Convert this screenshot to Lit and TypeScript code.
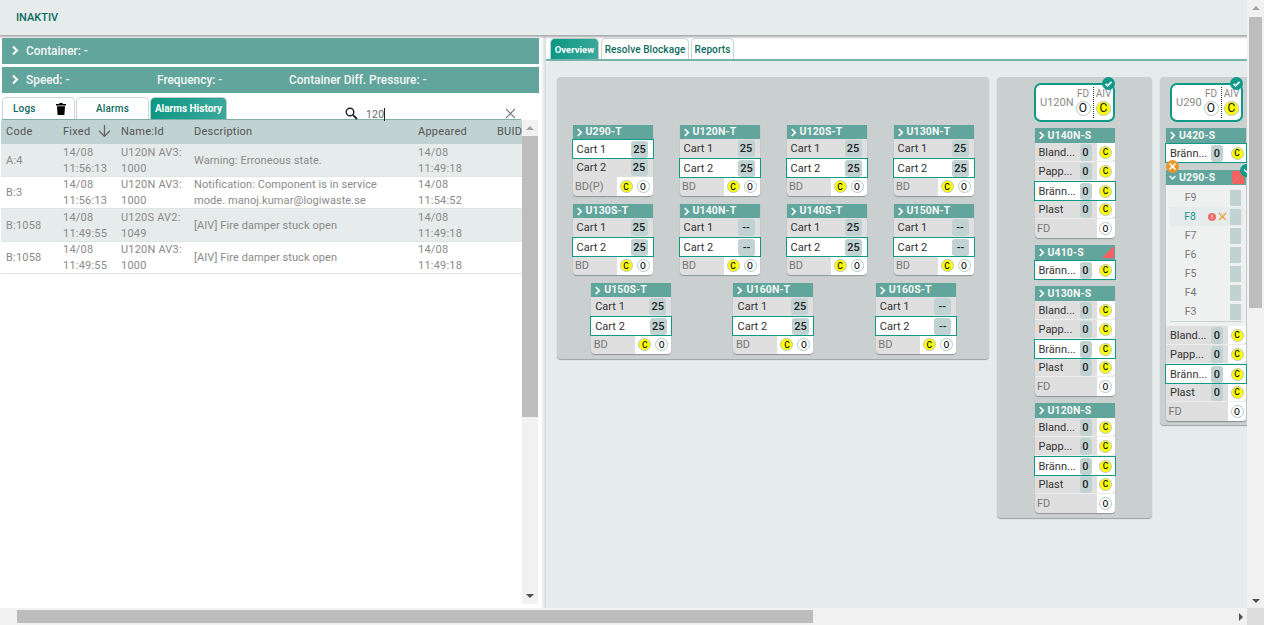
import { LitElement, css, html, nothing } from 'lit';
import { customElement } from 'lit/decorators.js';

const chevron = html`<svg class="chev" viewBox="0 0 8 10"><path d="M2 1l4 4-4 4" fill="none" stroke="#fff" stroke-width="2"/></svg>`;
const check = html`<svg viewBox="0 0 13 13" width="13" height="13"><circle cx="6.5" cy="6.5" r="6.5" fill="#0f9a88"/><path d="M3.5 6.8l2.1 2 3.9-4" fill="none" stroke="#fff" stroke-width="1.7"/></svg>`;

type Row = { label: string; value?: string; sel?: boolean };

const tRows: { name: string; sel: number; value: string; bd?: string }[][] = [
  [
    { name: 'U290-T', sel: 1, value: '25', bd: 'BD(P)' },
    { name: 'U120N-T', sel: 2, value: '25' },
    { name: 'U120S-T', sel: 2, value: '25' },
    { name: 'U130N-T', sel: 2, value: '25' },
  ],
  [
    { name: 'U130S-T', sel: 2, value: '25' },
    { name: 'U140N-T', sel: 2, value: '--' },
    { name: 'U140S-T', sel: 2, value: '25' },
    { name: 'U150N-T', sel: 2, value: '--' },
  ],
  [
    { name: 'U150S-T', sel: 2, value: '25' },
    { name: 'U160N-T', sel: 2, value: '25' },
    { name: 'U160S-T', sel: 2, value: '--' },
  ],
];

const alarms = [
  ['A:4', '14/08 11:56:13', 'U120N AV3: 1000', 'Warning: Erroneous state.', '14/08 11:49:18'],
  ['B:3', '14/08 11:56:13', 'U120N AV3: 1000', 'Notification: Component is in service mode. manoj.kumar@logiwaste.se', '14/08 11:54:52'],
  ['B:1058', '14/08 11:49:55', 'U120S AV2: 1049', '[AIV] Fire damper stuck open', '14/08 11:49:18'],
  ['B:1058', '14/08 11:49:55', 'U120N AV3: 1000', '[AIV] Fire damper stuck open', '14/08 11:49:18'],
];

const fractions: Row[] = [
  { label: 'Bland...', value: '0' },
  { label: 'Papp...', value: '0' },
  { label: 'Bränn...', value: '0', sel: true },
  { label: 'Plast', value: '0' },
  { label: 'FD' },
];

@customElement('app-root')
export class AppRoot extends LitElement {
  static styles = css`
    :host {
      display: grid;
      grid-template-columns: 1247px 17px;
      grid-template-rows: 608px 17px;
      width: 1264px;
      height: 625px;
      overflow: hidden;
      font-family: Roboto, "Liberation Sans", sans-serif;
      background: #fff;
      color: #333;
    }
    .page { display: flex; flex-direction: column; overflow: hidden; min-width: 0; }
    .top {
      flex: none;
      height: 35px;
      box-sizing: border-box;
      padding: 11px 0 0 16px;
      background: #e6eceb;
      box-shadow: 0 1px 2px 1px #a9a9a9;
      color: #0c6b5f;
      font-size: 11px;
      line-height: 14px;
      font-weight: 500;
      position: relative;
    }
    .main { flex: 1; display: flex; min-height: 0; }

    /* left */
    .left { flex: none; width: 541px; box-sizing: border-box; padding: 3px 2px 0 2px; display: flex; flex-direction: column; }
    .bar {
      height: 26px;
      box-sizing: border-box;
      padding-bottom: 1px;
      margin-bottom: 3px;
      background: #62a59c;
      color: #f2f7f6;
      font-size: 11.9px;
      font-weight: 500;
      display: grid;
      grid-template-columns: 24px 131px 132px 1fr;
      align-items: center;
    }
    .bar .chev { width: 8px; height: 11px; margin-left: 9px; }
    .tabs { display: flex; align-items: flex-end; margin: 1px 0 0 0; width: 519px; height: 23px; border-bottom: 1px solid #7fb0a8; box-sizing: border-box; position: relative; }
    .tab {
      box-sizing: border-box;
      height: 22px;
      border: 1px solid #c9d6d4;
      border-bottom: 0;
      border-radius: 5px 5px 0 0;
      background: #fff;
      color: #0c6b5f;
      font-size: 10px;
      font-weight: 500;
      letter-spacing: .2px;
      display: flex;
      align-items: center;
      justify-content: center;
      flex: none;
    }
    .tab.on { background: linear-gradient(100deg, #0b9784, #3da89b); color: #fff; border-color: #b7cfcb; font-weight: 700; letter-spacing: 0; font-size: 9.5px; }
    .logs { width: 73px; justify-content: flex-start; padding-left: 10px; gap: 20px; }
    .alarms { width: 73px; margin-right: 1px; margin-left: 1px; }
    .tab.on.history { width: 77px; font-size: 10px; }
    .search { display: flex; align-items: center; margin: 0 0 0 118px; height: 11px; flex: 1; font-size: 10.5px; color: #666; }
    .search .txt { margin: 1px 0 0 8px; border-right: 1px solid #222; line-height: 13px; letter-spacing: .2px; }
    .search .x { margin-left: auto; margin-right: 5px; }
    .tablewrap { flex: 1; display: grid; grid-template-columns: 521px 16px; margin-left: -1px; min-height: 0; }
    .thead, .tr { display: grid; grid-template-columns: 57px 58px 73px 224px 79px 24px; padding-left: 5px; align-items: center; }
    .thead { height: 24px; box-sizing: border-box; padding-bottom: 2px; background: #c1d2d2; color: #555; font-size: 11px; letter-spacing: .25px; overflow: hidden; white-space: nowrap; }
    .thead .sort { display: flex; align-items: center; gap: 8px; }
    .tr { box-sizing: border-box; border-bottom: 1px solid #dfe5e4; height: 32.5px; padding-top: .5px; color: #8a8a8a; font-size: 11px; line-height: 16px; letter-spacing: .2px; }
    .tr:nth-child(even) { background: #e6eceb; }
    .tr span:nth-child(2), .tr span:nth-child(5) { width: 46px; }
    .tr span:nth-child(3) { width: 64px; }
    .tr span:nth-child(4) { width: 200px; letter-spacing: .08px; }
    .vs { background: #f1f1f1; display: flex; flex-direction: column; align-items: center; }
    .vs .thumb { background: #bdbdbd; width: 100%; }
    .left .vs { margin-bottom: 4px; }
    .left .vs .thumb { height: 281px; }
    .up, .down, .rgt { width: 0; height: 0; border: 4px solid transparent; flex: none; }
    .up { border-bottom-color: #a3a3a3; border-top-width: 0; margin: 6px 0 6px; }
    .down { border-top-color: #505050; border-bottom-width: 0; margin: auto 0 6px; }

    /* right */
    .splitter { flex: none; width: 5px; background: linear-gradient(90deg, #fff, #d4d9d9); }
    .right { flex: 1; min-width: 0; display: flex; flex-direction: column; }
    .rtabs { flex: none; display: flex; gap: 2px; padding: 3px 0 0 4px; height: 26px; box-sizing: border-box; border-bottom: 2px solid #77b3aa; background: linear-gradient(#f1f3f3, #fff 6px); }
    .rtabs .tab { height: 21px; letter-spacing: .1px; }
    .rtabs .tab.on { letter-spacing: 0; }
    .ov { width: 49px; }
    .rb { width: 88px; }
    .rp { width: 43px; }
    .content { flex: 1; min-height: 0; display: flex; align-items: flex-start; gap: 8px; padding: 16px 0 0 11px; background: #e6eceb; border-radius: 5px 0 0 0; overflow: hidden; }
    .panel { flex: none; box-sizing: border-box; background: #c9d0cf; border-radius: 4px; box-shadow: 0 1px 1px #9aa3a2; }
    .p1 { width: 432px; height: 282px; padding: 48px 2px 0; }
    .cardrow { display: flex; justify-content: space-around; margin-bottom: 8px; }
    .cardrow:last-child { padding-left: 1px; }
    .p2 { width: 155px; height: 441px; padding-top: 6px; display: flex; flex-direction: column; align-items: center; gap: 7px; }
    .p2 .status { margin-bottom: -1px; }
    .p3 { width: 100px; height: 348px; padding: 6px 0 0 6px; display: flex; flex-direction: column; align-items: flex-start; }

    /* cards */
    .card { width: 80px; flex: none; background: #dfdfdf; border-radius: 0 0 4px 4px; box-shadow: 0 1px 1px #8d9695; position: relative; }
    .head { height: 14px; background: #62a59c; color: #f4f8f7; font-size: 10.5px; font-weight: 700; line-height: 14px; display: flex; align-items: center; gap: 3px; padding-left: 3px; letter-spacing: .1px; position: relative; }
    .s .head { height: 15px; }
    .head .chev { width: 7px; height: 9px; }
    .row { height: 19px; display: flex; align-items: center; font-size: 11px; box-sizing: border-box; padding-left: 4px; position: relative; }
    .row.sel { height: 20px; margin: 0 -1px -1px; padding-left: 4px; background: #fff; border: 1.5px solid #0f9a88; z-index: 1; }
    .row .lab { flex: 1; white-space: nowrap; }
    .val { flex: none; box-sizing: border-box; width: 17px; height: 17px; margin-right: 5px; background: #c1d2d2; border-radius: 3px; font-size: 11px; font-weight: 500; color: #222; display: flex; align-items: center; justify-content: center; }
    .t .sel .val { margin-right: 4.5px; }
    .row.bd { padding-left: 2.5px; padding-right: 0; }
    .row.bd .lab { color: #777; font-size: 11px; }
    .white { flex: none; align-self: stretch; background: #fff; display: flex; align-items: center; justify-content: center; gap: 4px; border-radius: 0 0 4px 0; }
    .t .white { width: 36px; }
    .s .val { width: 12px; margin-right: 5px; }
    .s .white { width: 18px; }
    .s .row:not(.sel) { border-bottom: 1px solid #ececec; }
    .s .row.bd { border-bottom: 0; }
    .ico { box-sizing: border-box; width: 13px; height: 13px; border-radius: 50%; border: 1.5px solid #b5c8c6; display: flex; align-items: center; justify-content: center; font-size: 8.5px; font-weight: 500; color: #111; background: #fff; flex: none; }
    .ico.c { background: #ffff00; }
    .ico.big { width: 15px; height: 15px; font-size: 12px; font-weight: 400; }

    .corner { position: absolute; right: 1px; top: 1px; width: 0; height: 0; border-left: 12px solid transparent; border-bottom: 12px solid #f66060; border-top: 0; }
    .redsq { position: absolute; right: 2px; top: 1px; width: 12px; height: 13px; }
    .badge { position: absolute; line-height: 0; z-index: 2; }
    .status { box-sizing: border-box; flex: none; width: 81px; height: 39px; background: #fff; border: 2px solid #0f9a88; border-radius: 7px; display: flex; align-items: center; position: relative; color: #8a8a8a; font-size: 11px; padding-left: 4px; }
    .status .nm { flex: 1; min-width: 0; white-space: nowrap; }
    .st-col { flex: none; box-sizing: border-box; display: flex; flex-direction: column; align-items: center; font-size: 10px; width: 20px; height: 31px; color: #888; gap: 1px; line-height: 13px; }
    .st-col.aiv { border-left: 1px dotted #333; }
    .p3 .status { width: 73px; margin: 0 0 6px 4px; }
    .p3 .sec { margin-bottom: 8px; }
    .flist { background: #eff1f1; width: 80px; padding-top: 3px; flex: none; }
    .f { height: 19px; display: flex; align-items: center; font-size: 10.5px; color: #777; position: relative; }
    .f .nm { width: 49px; text-align: center; }
    .f .sq { width: 11px; height: 16px; background: #c1d2d2; margin-left: auto; margin-right: 5px; flex: none; }
    .f.on { background: #e6eceb; margin: 0 3px 0 4px; }
    .f.on .nm { color: #0f9a88; width: 40px; }
    .f.on .sq { margin-right: 2px; }
    .f.on svg { flex: none; }
    .f.on .alert { margin-left: -2px; }
    .f.on .tools { margin-left: 2px; }
    .divider { height: 1px; background: #c9d0cf; margin: 0 4px 0 4px; }
    .sub { padding-top: 4px; background: #eff1f1; width: 80px; flex: none; border-radius: 0 0 4px 4px; box-shadow: 0 1px 1px #8d9695; }
    .sub .rows { background: #dfdfdf; border-radius: 4px; }

    .hs { grid-column: 1; background: #f1f1f1; display: flex; align-items: center; }
    .hs .thumb { width: 796px; height: 13px; margin-left: 17px; background: #bdbdbd; }
    .rgt { border-left-color: #505050; border-right-width: 0; margin: 0 4px 0 auto; }
    .vmain { grid-column: 2; grid-row: 1; background: #f1f1f1; display: flex; flex-direction: column; align-items: center; }
    .vmain .thumb { width: 13px; height: 291px; background: #bdbdbd; }
    .vmain .up { margin: 6px 0 7px; }
    .vmain .down { margin-bottom: 5px; }
    .cr { grid-column: 2; background: #dcdcdc; }
  `;

  private ico(kind: 'c' | 'o', big = false) {
    return html`<span class="ico ${kind} ${big ? 'big' : ''}">${kind === 'c' ? 'C' : 'O'}</span>`;
  }

  private tCard(c: { name: string; sel: number; value: string; bd?: string }) {
    return html`<div class="card t">
      <div class="head">${chevron}${c.name}</div>
      ${[1, 2].map(
        (n) => html`<div class="row ${c.sel === n ? 'sel' : ''}">
          <span class="lab">Cart ${n}</span><span class="val">${c.value}</span>
        </div>`
      )}
      <div class="row bd">
        <span class="lab">${c.bd ?? 'BD'}</span>
        <span class="white">${this.ico('c')}${this.ico('o')}</span>
      </div>
    </div>`;
  }

  private sRow(r: Row) {
    return html`<div class="row ${r.sel ? 'sel' : ''} ${r.value ? '' : 'bd'}">
      <span class="lab">${r.label}</span>
      ${r.value ? html`<span class="val">${r.value}</span>` : nothing}
      <span class="white">${this.ico(r.value ? 'c' : 'o')}</span>
    </div>`;
  }

  private sCard(name: string, rows: Row[], corner = false) {
    return html`<div class="card s">
      <div class="head">${chevron}${name}${corner ? html`<span class="corner"></span>` : nothing}</div>
      ${rows.map((r) => this.sRow(r))}
    </div>`;
  }

  private status(name: string) {
    return html`<div class="status">
      <span class="nm">${name}</span>
      <div class="st-col">FD${this.ico('o', true)}</div>
      <div class="st-col aiv">AIV${this.ico('c', true)}</div>
      <span class="badge" style="right:-2px;top:-8px">${check}</span>
    </div>`;
  }

  private renderLeft() {
    return html`<section class="left">
      <div class="bar">${chevron}<span>Container: -</span></div>
      <div class="bar">${chevron}<span>Speed: -</span><span>Frequency: -</span><span>Container Diff. Pressure: -</span></div>
      <div class="tabs">
        <div class="tab logs">Logs
          <svg width="10" height="12" viewBox="0 0 10 12"><path d="M3.5 0h3l.5 1h3v1.5H0V1h3zM1 3.2h8L8.4 12H1.6z" fill="#000"/></svg>
        </div>
        <div class="tab alarms">Alarms</div>
        <div class="tab on history">Alarms History</div>
        <div class="search">
          <svg width="13" height="13" viewBox="0 0 13 13"><circle cx="5" cy="5" r="3.8" fill="none" stroke="#222" stroke-width="1.4"/><path d="M8 8l4 4" stroke="#222" stroke-width="1.8"/></svg>
          <span class="txt">120</span>
          <svg class="x" width="11" height="11" viewBox="0 0 11 11"><path d="M1 1l9 9M10 1l-9 9" stroke="#777" stroke-width="1.1"/></svg>
        </div>
      </div>
      <div class="tablewrap">
        <div>
          <div class="thead">
            <span>Code</span>
            <span class="sort">Fixed
              <svg width="13" height="12" viewBox="0 0 13 12"><path d="M6.5 0v11M1 5.8l5.5 5.5L12 5.8" fill="none" stroke="#666" stroke-width="1.3"/></svg>
            </span>
            <span>Name:Id</span><span>Description</span><span>Appeared</span><span>BUID</span>
          </div>
          ${alarms.map(
            (a) => html`<div class="tr">${a.map((cell) => html`<span>${cell}</span>`)}</div>`
          )}
        </div>
        <div class="vs">
          <span class="up"></span>
          <div class="thumb"></div>
          <span class="down"></span>
        </div>
      </div>
    </section>`;
  }

  private renderRight() {
    return html`<section class="right">
      <div class="rtabs">
        <div class="tab on ov">Overview</div>
        <div class="tab rb">Resolve Blockage</div>
        <div class="tab rp">Reports</div>
      </div>
      <div class="content">
        <div class="panel p1">
          ${tRows.map((row) => html`<div class="cardrow">${row.map((c) => this.tCard(c))}</div>`)}
        </div>
        <div class="panel p2">
          ${this.status('U120N')}
          ${this.sCard('U140N-S', fractions)}
          ${this.sCard('U410-S', [fractions[2]], true)}
          ${this.sCard('U130N-S', fractions)}
          ${this.sCard('U120N-S', fractions)}
        </div>
        <div class="panel p3">
          ${this.status('U290')}
          <div class="card s sec">
            <div class="head">${chevron}U420-S</div>
            ${this.sRow(fractions[2])}
            <span class="badge" style="left:0;top:32px">
              <svg width="13" height="13" viewBox="0 0 13 13"><circle cx="6.5" cy="6.5" r="6.5" fill="#e6982a"/><path d="M3.5 3.5l6 6M9.5 3.5l-6 6" stroke="#fff" stroke-width="1.6"/></svg>
            </span>
          </div>
          <div class="card s">
            <div class="head">
              <svg class="chev" viewBox="0 0 10 8"><path d="M1 2l4 4 4-4" fill="none" stroke="#fff" stroke-width="2"/></svg>U290-S
              <svg class="redsq" viewBox="0 0 12 13"><rect width="12" height="13" fill="#f66060"/><path d="M0 13L12 0" stroke="#a99" stroke-width=".8"/></svg>
              <span class="badge" style="right:-7px;top:-6px">
                <svg width="13" height="13" viewBox="0 0 13 13"><circle cx="6.5" cy="6.5" r="6.5" fill="#0f9a88"/><path d="M4 5.5l2.5 2.5L9 5.5" fill="none" stroke="#fff" stroke-width="1.5"/></svg>
              </span>
            </div>
            <div class="flist">
              ${['F9', 'F8', 'F7', 'F6', 'F5', 'F4', 'F3'].map((f) =>
                f === 'F8'
                  ? html`<div class="f on"><span class="nm">${f}</span>
                      <svg class="alert" width="8" height="8" viewBox="0 0 8 8"><circle cx="4" cy="4" r="4" fill="#ee6b6b"/><path d="M4 1.8v2.6M4 5.3v1" stroke="#fff" stroke-width="1"/></svg>
                      <svg class="tools" width="9" height="9" viewBox="0 0 9 9"><path d="M1 1l7 7M8 1L1 8" stroke="#eda445" stroke-width="2" stroke-dasharray="1.4 .5"/></svg>
                      <span class="sq"></span></div>`
                  : html`<div class="f"><span class="nm">${f}</span><span class="sq"></span></div>`
              )}
              <div class="divider"></div>
            </div>
            <div class="sub"><div class="rows">${fractions.map((r) => this.sRow(r))}</div></div>
          </div>
        </div>
      </div>
    </section>`;
  }

  render() {
    return html`
      <div class="page">
        <header class="top">INAKTIV</header>
        <div class="main">
          ${this.renderLeft()}
          <div class="splitter"></div>
          ${this.renderRight()}
        </div>
      </div>
      <div class="vmain"><span class="up"></span><div class="thumb"></div><span class="down"></span></div>
      <div class="hs"><div class="thumb"></div><span class="rgt"></span></div>
      <div class="cr"></div>
    `;
  }
}
